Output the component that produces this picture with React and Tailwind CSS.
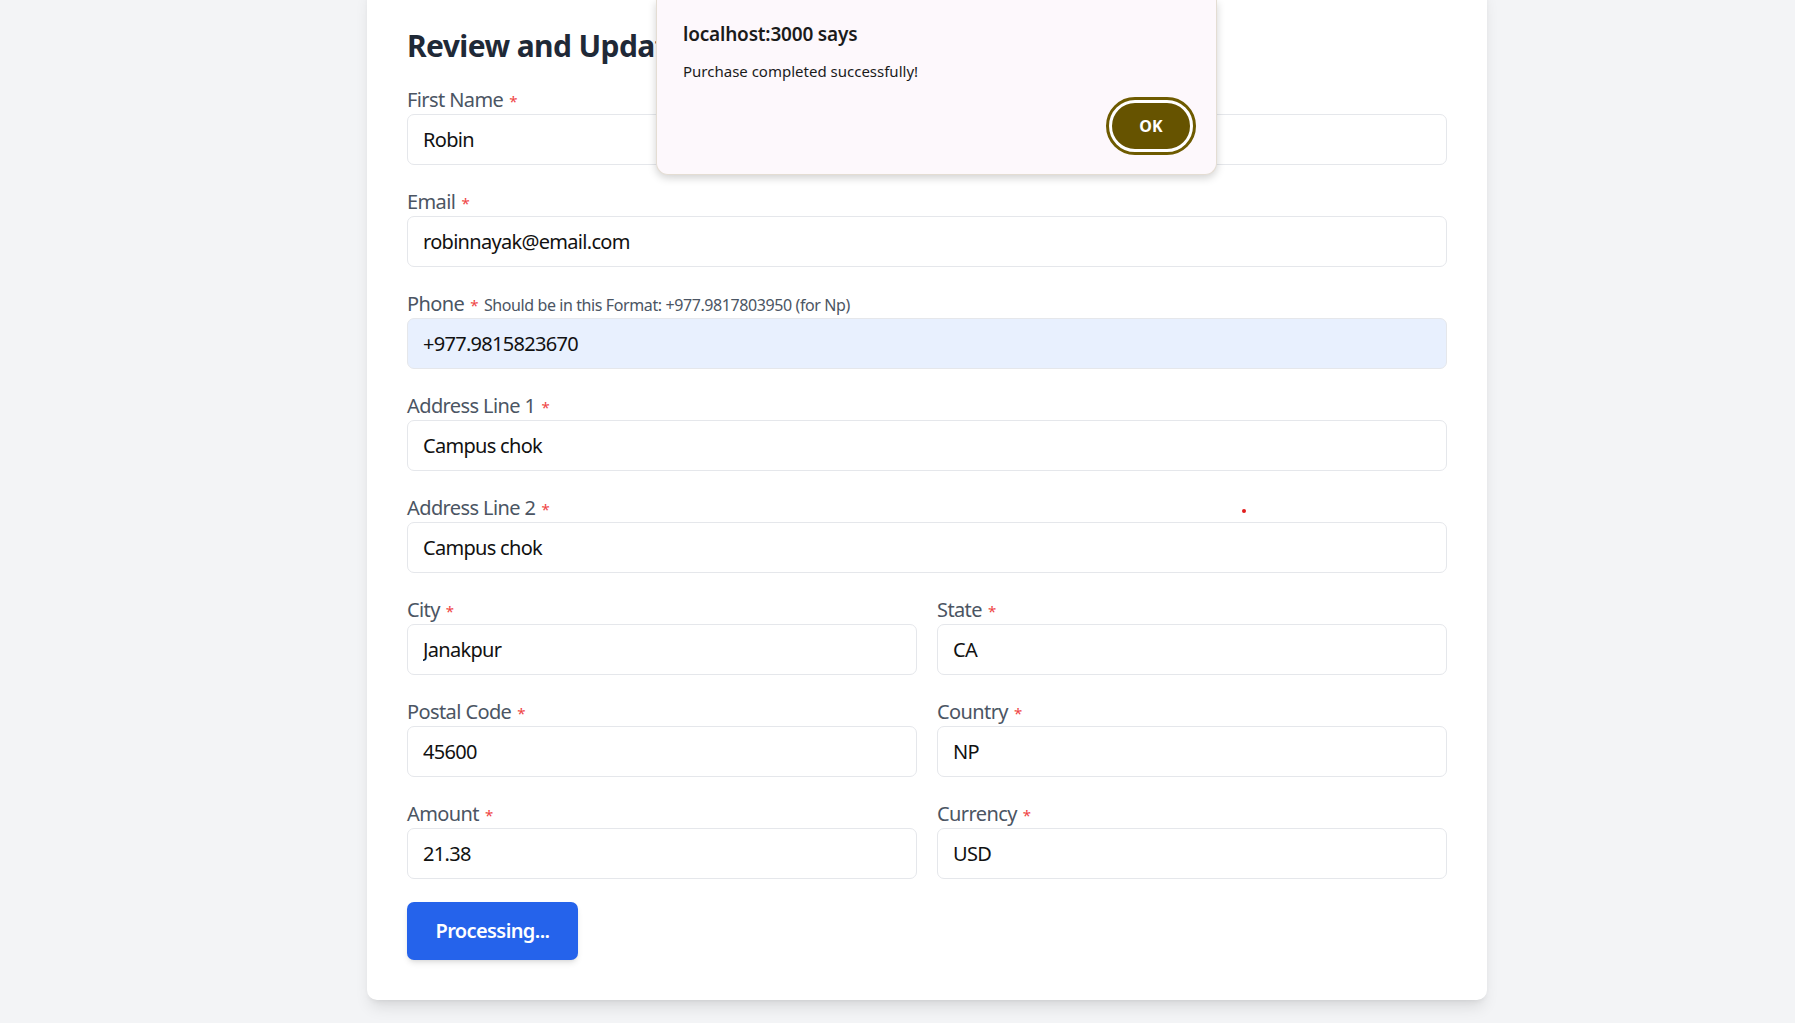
import { useState } from 'react';

const font = "font-['Segoe_UI','Noto_Sans',sans-serif]";

function Field({ label, value, hint, autofill }) {
  return (
    <div className="flex flex-col">
      <label className="h-[30px] pt-[1px] text-[20px] leading-[30px] tracking-[-0.03em] text-[#4b5563] whitespace-nowrap">
        {label}
        <span className="ml-[6px] text-[15px] text-[#ef4444]">*</span>
        {hint && (
          <span className="ml-[6px] text-[16px] tracking-[-0.025em] text-[#4b5563]">{hint}</span>
        )}
      </label>
      <input
        readOnly
        value={value}
        className={`h-[51px] w-full rounded-[7px] border border-[#e5e7eb] px-[15px] text-[20px] tracking-[-0.035em] text-[#111] outline-none ${
          autofill ? 'bg-[#e8f0fe]' : 'bg-white'
        }`}
      />
    </div>
  );
}

export default function App() {
  const [form] = useState({
    firstName: 'Robin',
    lastName: 'Nayak',
    email: 'robinnayak@email.com',
    phone: '+977.9815823670',
    address1: 'Campus chok',
    address2: 'Campus chok',
    city: 'Janakpur',
    state: 'CA',
    postalCode: '45600',
    country: 'NP',
    amount: '21.38',
    currency: 'USD',
  });

  return (
    <div className={`relative h-[1023px] overflow-hidden bg-[#f3f4f6] ${font}`}>
      <div className="ml-[367px] -mt-[17px] w-[1120px] rounded-[10px] bg-white p-[40px] shadow-lg">
        <h2 className="mb-[18px] pt-[3px] text-[30px] font-bold leading-[40px] tracking-[-0.02em] text-[#1f2937]">
          Review and Update
        </h2>
        <div className="flex flex-col gap-[21px]">
          <div className="grid grid-cols-2 gap-[20px]">
            <Field label="First Name" value={form.firstName} />
            <Field label="Last Name" value={form.lastName} />
          </div>
          <Field label="Email" value={form.email} />
          <Field
            label="Phone"
            value={form.phone}
            hint="Should be in this Format: +977.9817803950 (for Np)"
            autofill
          />
          <Field label="Address Line 1" value={form.address1} />
          <Field label="Address Line 2" value={form.address2} />
          <div className="grid grid-cols-2 gap-[20px]">
            <Field label="City" value={form.city} />
            <Field label="State" value={form.state} />
          </div>
          <div className="grid grid-cols-2 gap-[20px]">
            <Field label="Postal Code" value={form.postalCode} />
            <Field label="Country" value={form.country} />
          </div>
          <div className="grid grid-cols-2 gap-[20px]">
            <Field label="Amount" value={form.amount} />
            <Field label="Currency" value={form.currency} />
          </div>
          <div className="pt-[2px]">
            <button className="h-[58px] w-[171px] rounded-[7px] bg-[#2563eb] text-[20px] font-semibold tracking-[-0.03em] text-white shadow-md">
              Processing...
            </button>
          </div>
        </div>
      </div>

      {/* stray red dot */}
      <div className="absolute left-[1242px] top-[509px] h-[4px] w-[4px] rounded-full bg-[#e11d1d]" />

      {/* browser alert */}
      <div className="absolute left-[656px] top-0 flex h-[175px] w-[561px] flex-col rounded-b-[12px] border border-t-0 border-[#e4ddd3] bg-[#fdf8fc] pl-[26px] pr-[23px] pt-[21px] pb-[22px] shadow-[0_3px_8px_rgba(0,0,0,0.18)]">
        <div className="text-[19px] font-semibold leading-[26px] tracking-[-0.01em] text-[#1b1b1b]">localhost:3000 says</div>
        <div className="mt-[14px] text-[15px] leading-[20px] text-[#1b1b1b]">Purchase completed successfully!</div>
        <div className="mt-auto flex justify-end">
          <button className="h-[52px] w-[84px] rounded-full border-[3px] border-white bg-[#665300] text-[16px] font-bold text-white outline outline-[3px] outline-[#6e5b00]">
            OK
          </button>
        </div>
      </div>
    </div>
  );
}
